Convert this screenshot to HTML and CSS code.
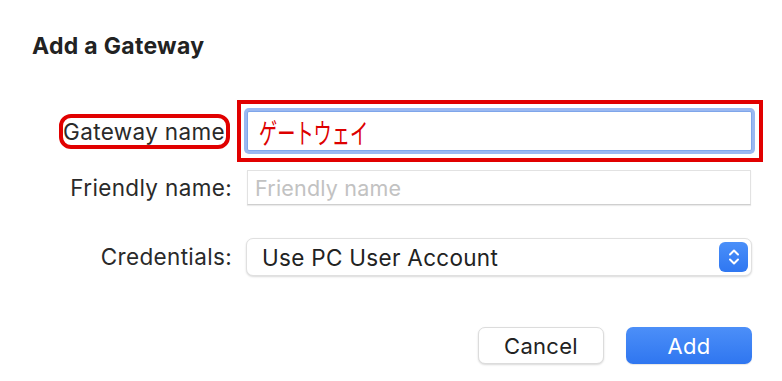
FILE: index.html
```html
<!DOCTYPE html>
<html lang="en">
<head>
<meta charset="utf-8">
<title>Add a Gateway</title>
<link rel="stylesheet" href="styles.css">
</head>
<body>
<div class="dialog">
  <h1 class="title">Add a Gateway</h1>
  <div class="form">
    <div class="row row-gateway">
      <div class="label-cell"><span class="label label-marked">Gateway name</span></div>
      <div class="field-cell">
        <div class="mark-box">
          <div class="input input-focused"><span class="jp">ゲートウェイ</span></div>
        </div>
      </div>
    </div>
    <div class="row row-friendly">
      <div class="label-cell"><span class="label">Friendly name:</span></div>
      <div class="field-cell">
        <div class="input input-plain"><span class="placeholder">Friendly name</span></div>
      </div>
    </div>
    <div class="row row-cred">
      <div class="label-cell"><span class="label">Credentials:</span></div>
      <div class="field-cell">
        <div class="popup">
          <span class="popup-text">Use PC User Account</span>
          <span class="stepper">
            <svg width="14" height="20" viewBox="0 0 14 20" fill="none" stroke="#fff" stroke-width="2" stroke-linecap="round" stroke-linejoin="round"><path d="M3 7.5 L7 3.5 L11 7.5"/><path d="M3 12.5 L7 16.5 L11 12.5"/></svg>
          </span>
        </div>
      </div>
    </div>
  </div>
  <div class="buttons">
    <button class="btn btn-cancel">Cancel</button>
    <button class="btn btn-add">Add</button>
  </div>
</div>
</body>
</html>
```

FILE: styles.css
```css
html, body {
  margin: 0;
  padding: 0;
  background: #ffffff;
}
body {
  width: 782px;
  height: 381px;
  overflow: hidden;
  font-family: "Inter", "Noto Sans", "Liberation Sans", sans-serif;
  color: #262626;
}
.dialog {
  padding: 31px 0 0 32px;
}
.title {
  margin: 0;
  font-size: 23px;
  font-weight: 700;
  line-height: 30px;
  letter-spacing: 0.3px;
  color: #222;
}
.form {
  margin-top: 39px;
  margin-left: -32px;
}
.row {
  display: flex;
  align-items: center;
}
.label-cell {
  width: 232px;
  display: flex;
  justify-content: flex-end;
  flex-shrink: 0;
}
.label {
  font-size: 22.5px;
  line-height: 26px;
  letter-spacing: 0.35px;
  color: #2a2a2a;
}
.label-marked {
  margin-right: 2px;
  border: 4px solid #e10000;
  border-radius: 12px;
  padding: 1px 1px 0 0;
}
.field-cell {
  flex: 1;
}
.row-gateway {
  height: 62px;
}
.mark-box {
  margin-left: 5px;
  border: 4px solid #e10000;
  padding: 7px 7px 7px 6px;
  box-sizing: border-box;
  width: 526px;
  height: 62px;
}
.input {
  box-sizing: border-box;
  background: #fff;
  display: flex;
  align-items: center;
}
.input-focused {
  height: 40px;
  width: 505px;
  border: 1px solid #7fa6ea;
  border-radius: 2px;
  box-shadow: 0 0 0 3px rgba(120, 160, 236, 0.75);
  padding-left: 11px;
}
.jp {
  display: inline-block;
  font-family: "Noto Sans CJK JP", "Noto Sans", sans-serif;
  font-size: 28px;
  line-height: 32px;
  color: #dd0000;
  transform: scaleX(0.65);
  transform-origin: left center;
  margin-top: 1px;
}
.row-friendly {
  margin-top: 8px;
  height: 35px;
}
.input-plain {
  margin-left: 15px;
  width: 504px;
  height: 35px;
  border: 1px solid #e2e2e2;
  border-bottom-color: #cfcfcf;
  box-shadow: 0 1px 1px rgba(0, 0, 0, 0.08);
  padding-left: 7px;
}
.placeholder {
  font-size: 21.5px;
  letter-spacing: 0.2px;
  color: #c2c2c2;
}
.row-cred {
  margin-top: 33px;
  height: 38px;
}
.popup {
  margin-left: 14px;
  width: 506px;
  height: 38px;
  box-sizing: border-box;
  border: 1px solid #e0e0e0;
  border-radius: 7px;
  box-shadow: 0 1px 2px rgba(0, 0, 0, 0.15);
  display: flex;
  align-items: center;
  justify-content: space-between;
  padding: 0 3px 0 15px;
  background: #fff;
}
.popup-text {
  font-size: 22.5px;
  letter-spacing: 0.3px;
  color: #222;
}
.stepper {
  width: 29px;
  height: 30px;
  border-radius: 6px;
  background: linear-gradient(#4a8ff9, #2f77f1);
  display: flex;
  align-items: center;
  justify-content: center;
}
.buttons {
  display: flex;
  justify-content: flex-end;
  gap: 22px;
  margin-top: 51px;
  margin-right: 30px;
}
.btn {
  width: 126px;
  height: 37px;
  border-radius: 7px;
  font-family: "Inter", "Noto Sans", "Liberation Sans", sans-serif;
  font-size: 22px;
  letter-spacing: 0.3px;
  padding: 0;
  cursor: default;
}
.btn-cancel {
  background: #fff;
  color: #222;
  border: 1px solid #dcdcdc;
  box-shadow: 0 1px 2px rgba(0, 0, 0, 0.15);
}
.btn-add {
  background: linear-gradient(#4c8ff8, #2f76f0);
  color: #fff;
  border: none;
  box-shadow: 0 1px 1px rgba(0, 0, 0, 0.1);
}
```
